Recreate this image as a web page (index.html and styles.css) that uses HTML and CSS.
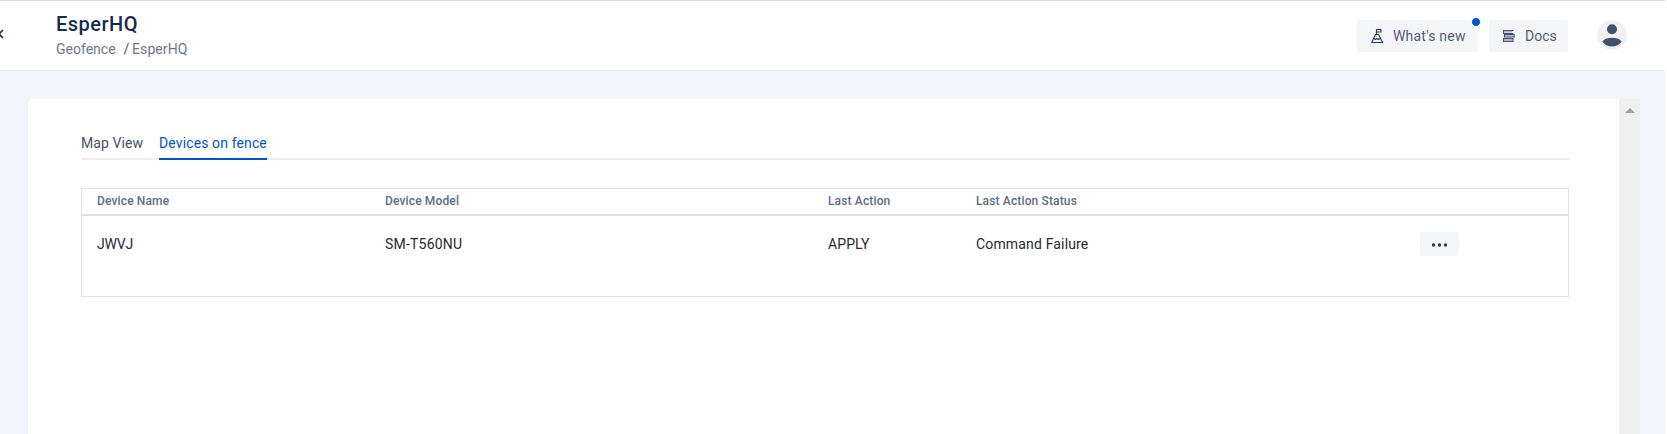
FILE: index.html
```html
<!DOCTYPE html>
<html lang="en">
<head>
<meta charset="utf-8">
<title>EsperHQ</title>
<link rel="stylesheet" href="styles.css">
</head>
<body>
<div class="app">
  <header class="topbar">
    <svg class="collapse" width="4" height="10" viewBox="0 0 4 10"><path d="M3 1L-1 5l4 4" fill="none" stroke="#172b4d" stroke-width="1.7"/></svg>
    <div class="heading">
      <h1 class="title">EsperHQ</h1>
      <nav class="crumbs"><span class="crumb-parent">Geofence</span><span class="crumb-slash">/</span><span class="crumb-current">EsperHQ</span></nav>
    </div>
    <div class="actions">
      <button class="button whats-new">
        <svg width="13" height="16" viewBox="0 0 13 16" fill="none" stroke="#253858" stroke-width="1.1"><path d="M5.500 7V1.500h4.500v2.500H5.500M4.500 6.500h3L11.700 14.500H.8zM2.800 10.500l1.700 1 1.300-1 1.500 1 1.800-1"/></svg>
        <span class="new-label">What's new</span>
        <i class="badge"></i>
      </button>
      <button class="button docs">
        <svg width="13" height="14" viewBox="0 0 13 14"><path d="M1.500 2.500h9M3 6.500h8.500M1.500 11h9" stroke="#b3bac5" stroke-width="2"/><path d="M11.500 1.500h-10v3h10M12.500 5.500H2.500v2.500h9.700V5.500M11.500 9.500h-10v3h9.500v-3" fill="none" stroke="#42526e" stroke-width="1.1"/></svg>
        <span class="docs-label">Docs</span>
      </button>
      <svg class="avatar" width="30" height="30" viewBox="0 0 30 30"><circle cx="15" cy="15" r="14.7" fill="#f0f0f0"/><circle cx="15" cy="9.2" r="5" fill="#42526e"/><path d="M5.3 21.5C7.5 18.7 11 17.7 15 17.7s7.500 1 9.700 3.800C22.500 24.800 19 26.500 15 26.500S7.500 24.800 5.300 21.500z" fill="#42526e"/></svg>
    </div>
  </header>
  <main class="page">
    <section class="panel">
      <div class="content">
        <div class="tabs">
          <a class="tab tab-map"><span>Map View</span></a>
          <a class="tab tab-devices active"><span>Devices on fence</span></a>
        </div>
        <div class="table">
          <div class="row head"><span class="h-name">Device Name</span><span class="h-model">Device Model</span><span class="h-action">Last Action</span><span class="h-status">Last Action Status</span><span></span></div>
          <div class="row data"><span class="d-name">JWVJ</span><span class="d-model">SM-T560NU</span><span class="d-action">APPLY</span><span class="d-status">Command Failure</span>
            <button class="more"><svg width="17" height="4" viewBox="0 0 17 4" fill="#253858"><circle cx="1.500" cy="2" r="1.700"/><circle cx="7.500" cy="2" r="1.700"/><circle cx="13.500" cy="2" r="1.700"/></svg></button></div>
        </div>
      </div>
      <div class="scrollbar"><i class="arrow"></i></div>
    </section>
  </main>
</div>
</body>
</html>
```
FILE: styles.css
```css
* { box-sizing: border-box; }
body { margin: 0; background: #fff; overflow: hidden; font-family: Roboto, "Liberation Sans", sans-serif; font-size: 14px; color: #262b33; }
button { font: inherit; border: 0; padding: 0; }
svg { display: block; flex: none; }
span { white-space: nowrap; }
.app { width: 1665px; height: 434px; display: flex; flex-direction: column; background: #f4f5fb; }
.topbar { height: 71px; flex: none; display: flex; background: #fff; border-top: 1px solid #d9dae0; border-bottom: 1px solid #e8e9ed; }
.collapse { margin-top: 28px; }
.heading { margin-left: 52px; padding-top: 10px; }
.title { margin: 0; font-size: 20px; line-height: 26px; font-weight: 500; letter-spacing: .5px; color: #172b4d; }
.crumbs { display: flex; margin-top: 2px; line-height: 20px; color: #6b778c; }
.crumb-parent { width: 67.5px; }
.crumb-slash { width: 8.5px; color: #42526e; }
.crumb-current { letter-spacing: .1px; }
.actions { margin-left: auto; display: flex; padding: 19px 38px 0 0; }
.button { position: relative; height: 32px; display: flex; align-items: center; border-radius: 3px; background: #f4f5f7; color: #505f79; }
.whats-new { width: 121px; padding-left: 14px; gap: 9px; margin-right: 11px; }
.new-label { letter-spacing: .2px; }
.docs { width: 79px; padding-left: 13px; gap: 10px; margin-right: 29px; }
.badge { position: absolute; right: -3px; top: -3px; width: 10px; height: 10px; border: 1px solid #fff; border-radius: 50%; background: #0052cc; }
.page { flex: 1; padding: 28px 25px 0 28px; display: flex; }
.panel { flex: 1; display: flex; background: #fff; border-radius: 5px 0 0 0; }
.content { flex: 1; padding: 32px 50px 0 53px; }
.scrollbar { width: 21px; background: #f0f0f0; padding: 9px 0 0 6px; }
.arrow { display: block; width: 0; border: solid transparent; border-width: 0 5px 5px; border-bottom-color: #a0a0a0; }
.tabs { height: 29px; display: flex; gap: 16px; border-bottom: 2px solid #ebecf0; line-height: 24px; color: #42526e; }
.tab { height: 29px; }
.tab-map { width: 62px; letter-spacing: .1px; }
.tab-devices { width: 108px; letter-spacing: .12px; }
.active { color: #0052cc; border-bottom: 2px solid #0052cc; }
.table { height: 109px; margin-top: 28px; border: 1px solid #dfe1e6; }
.row { display: grid; grid-template-columns: 288px 443px 148px 444px 1fr; padding-left: 15px; }
.head { height: 27px; line-height: 25px; border-bottom: 2px solid #dfe1e6; font-size: 12px; font-weight: 500; letter-spacing: .14px; color: #5e6c84; }
.data { padding-top: 16px; line-height: 24px; }
.d-name { letter-spacing: -.2px; }
.d-model { letter-spacing: .2px; }
.d-action { letter-spacing: .1px; }
.d-status { letter-spacing: .16px; }
.more { width: 39px; height: 24px; display: flex; align-items: center; padding: 2px 0 0 12px; border-radius: 3px; background: #f4f5f7; }
```
